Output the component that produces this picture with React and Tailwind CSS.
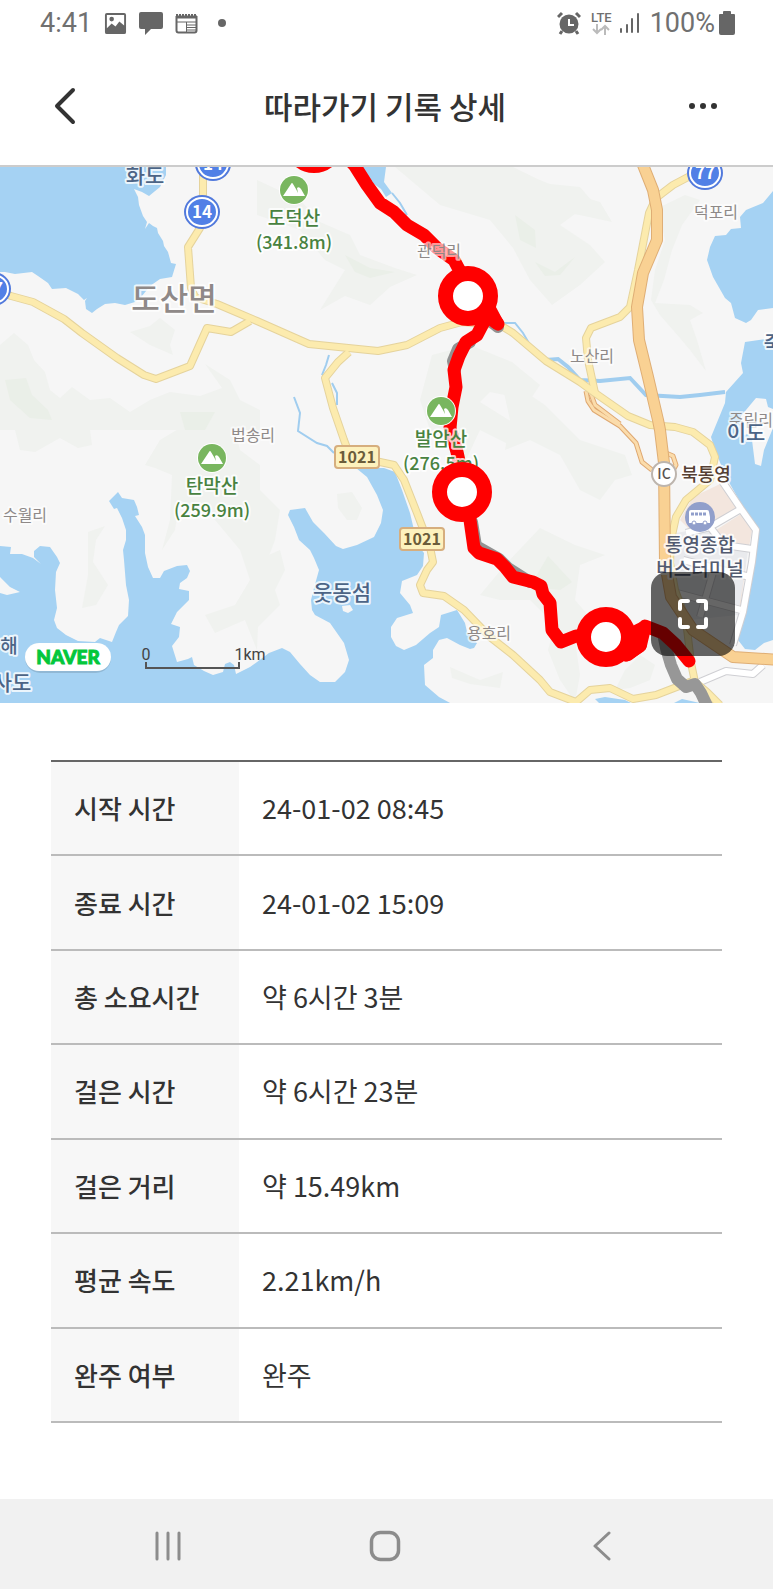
import { useState } from 'react'

const RECORD = [
  { label: '시작 시간', value: '24-01-02 08:45' },
  { label: '종료 시간', value: '24-01-02 15:09' },
  { label: '총 소요시간', value: '약 6시간 3분' },
  { label: '걸은 시간', value: '약 6시간 23분' },
  { label: '걸은 거리', value: '약 15.49km' },
  { label: '평균 속도', value: '2.21km/h' },
  { label: '완주 여부', value: '완주' },
]

// Map drawing data, all in the map's own coordinates
const WATER = [
  'M0 160H166V175L160 187L149 196L142 192L134 189L138 197L139 205L143 216L147 222L145 229L149 223L153 226L157 228L158 233L163 241L164 246L168 252L171 263L176 264L172 277L160 279L150 286L142 296L135 302L125 305L115 303L105 304L97 309L92 313L86 309L85 301L87 298L84 300L78 294L66 288L52 289L48 283L38 276L32 272L15 274L5 272H0Z',
  'M0 546L11 547L10 554L22 554L33 558L41 564L34 557L34 551L40 546L50 547L57 557L60 563L56 572L55 590L57 608L54 620L57 628L66 635L78 641L95 642L100 638L112 642L116 632L119 625L128 616L129 600L126 585L124 560L123 550L126 540L126 530L122 518L117 508L114 509L109 501L118 492L122 498L134 500L137 507L139 515L135 516L142 527L145 535L145 553L148 567L153 578L160 578L164 571L177 566L187 565L190 571L187 578L180 583L179 589L189 591V600L177 612L171 624L180 627L179 637L172 646L177 662L188 659L192 657L194 665L204 671L213 675L223 672L225 664L230 662L234 665L236 674L250 667L257 662L269 653L282 648L290 652L300 664L310 675L320 682H335L345 672L349 660L344 643L330 623L315 615L312 610L311 600L314 588L319 570L314 558L310 550L299 540L294 527L288 515L290 510L305 508L313 522L324 533L336 546L343 549L357 545L374 537L381 523L383 510L377 495L367 477L356 468H384L395 472L402 490L410 513L414 530L420 548L424 553L423 566L417 575L402 581L400 593L410 605L413 613L397 618L391 627L391 637L396 646L404 650L416 645L430 633L439 627L441 615L457 610L465 623L467 632L477 643L474 648L470 649L460 645L447 638L439 640L433 650L433 658L424 665L425 685L439 697L452 704H0Z',
  'M773 191L763 203L746 210L740 217L741 228L731 229L726 235L715 236L710 247L707 260L713 277L725 298L731 303L735 318L746 323L751 320L758 310L773 308Z',
  'M773 338L745 342L741 363L743 373L726 392L725 403L718 420L711 437L715 450L726 477L743 507L758 528L755 557L746 607L738 640L745 649L755 650L764 643L773 640Z',
  'M361 167H386L384 182L392 193L386 197L381 189L370 181Z',
  'M595 699L605 697L625 700L633 704H600Z',
  'M674 703L682 699L700 703Z',
]

const ISLANDS = [
  'M0 577L10 587L20 592L7 595L0 593Z',
  'M342 606L350 605L353 610L348 613L343 611Z',
  'M741 416L756 398L766 399L768 407L773 409V428L764 450L761 466L755 464L752 440L748 434L741 436Z',
]

const HILLS = [
  'M0 345L14 333L28 345L34 360L45 372L50 390L60 398L72 387L90 400L110 398L130 412L150 400L170 392L200 396L222 388L205 364L230 380L240 400L260 410V430H0Z',
  'M130 332L150 326L160 318L175 330L170 345L173 355L150 345Z',
  'M257 180L300 200L320 222L350 235L360 255L395 268L417 275L390 287L370 305L345 296L320 310L345 270L325 260L300 230L257 215Z',
  'M395 167H513L560 190L600 202L612 222L575 214L560 225L590 245L605 262L580 285L552 305L530 280L513 248L490 220L440 205Z',
  'M513 170L550 184L580 187L608 220L575 214L540 195L513 186Z',
  'M658 208L685 195L700 200L682 225L672 250L664 280L655 303L690 305L703 313L690 320L697 340L706 371L690 350L680 338L660 315L651 300L655 270L665 240Z',
  'M432 355L470 345L512 362L540 385L530 400L490 392L480 402L525 430L510 445L480 430L466 460L430 430L420 400Z',
  'M500 375L545 405L580 440L625 455L632 475L615 480L600 500L580 490L560 455L530 440L505 450L510 420Z',
  'M145 465L160 440L185 425L235 430L240 450L260 465V490L280 510L275 540L260 580L257 650L245 620L215 633L205 615L235 605L250 580L240 550L215 520L180 500L175 530L162 550L170 520L172 475L155 468Z',
  'M15 430H90L92 445L78 448L60 438L35 452L20 450Z',
  'M88 532L105 526L96 540L93 562L108 585L96 605L82 608L88 575Z',
  'M337 494L352 492L362 508L357 520L347 520L338 508Z',
  'M257 560L280 550L285 570L275 590L280 605L257 628Z',
  'M480 595L505 565L540 528L575 545L605 555L580 565L575 600L588 615L575 640L580 675L575 702L560 680L548 650L555 625L530 600L500 600Z',
  'M640 655L655 665L650 680L630 688L615 690L625 670Z',
  'M450 667L480 680L503 672L500 688L470 684L452 678Z',
]

const DARK_HILLS = [
  'M5 380L26 378L32 395L48 410L52 420L30 418L10 400Z',
  'M180 412L215 412L205 430H185Z',
  'M515 215L535 230L536 248L520 240Z',
  'M535 262L555 272L575 257L560 275L545 276Z',
  'M345 255L370 268L395 272L370 278L355 272Z',
  'M535 578L548 556L572 582L560 590L540 588Z',
]

const RIVERS = [
  'M392 193L400 203L407 215',
  'M504 323H515L523 333L530 345',
  'M546 360L558 359L568 367L580 380L600 381L630 378L646 395L680 397L700 395L725 392',
  'M329 355L326 365L322 375',
  'M332 383L337 393V405',
  'M294 397L300 413L298 431L317 443L327 446L334 453',
]

const YELLOW_ROADS = [
  'M0 292L11 296L33 302L64 319L82 333L117 358L144 375L156 379L190 366L207 328L231 332L250 321',
  'M203 160V195L200 228L188 247L191 288L195 297L217 304L257 321L309 344L378 351L407 345L440 328L462 322L500 325L513 333L546 361L580 382L595 393L628 416L650 425L675 427L693 432L710 445L715 457L710 480L686 500L676 517L671 540L670 563L675 590L686 620L691 663L695 682L707 692L720 705',
  'M690 176L673 185L656 198L649 213L638 270L630 307L620 317L591 328L586 338L588 360L595 393',
  'M349 352L338 362L325 378L333 408L344 440L350 456L380 462L394 465L404 480L417 513L430 547L433 562L427 570L420 585L423 593L444 596L464 610L490 637L513 655L540 680L550 692L576 702L590 690L610 688L633 699L656 695L695 680',
]

const ORANGE_ROAD = 'M641 160L653 190L657 210V240L643 273L637 307L639 340L648 377L658 420L660 430L664 463L665 563L671 597L693 630L733 657L780 660'
const RAMPS = [
  'M586 391L588 401L594 410L620 426L636 443L642 462L652 470',
  'M591 394L595 405L620 424',
  'M666 453L673 456L676 465L672 472',
]

const CITY_ROADS = [
  'M722 481L741 509L756 530L752 562L743 612L733 645',
  'M741 509L710 527L686 533',
  'M710 527L724 545L752 549',
  'M683 560L750 577',
  'M677 593L741 610',
  'M716 562L700 617',
  'M700 682L726 671L753 674L763 665',
]

const ROUTE = 'M346 156L355 166L367 185L380 203L394 212L407 225L424 235L437 248L454 260L462 275L480 300L498 324L487 316L477 335L466 342L459 356L454 370L456 387L452 407L450 428L457 452L462 475L470 520L474 548L479 553L497 559L505 567L513 577L533 582L541 586L543 594L550 603L552 630L561 642L576 636L606 637L626 655L640 646L637 637L645 626L663 633L676 645L689 661'
const MARKERS = [[314, 143], [468, 296], [462, 492], [606, 637]]

const PLACES = [
  { x: 716, y: 218, text: '덕포리' },
  { x: 592, y: 362, text: '노산리' },
  { x: 253, y: 441, text: '법송리' },
  { x: 25, y: 521, text: '수월리' },
  { x: 489, y: 639, text: '용호리' },
  { x: 439, y: 257, text: '관덕리' },
  { x: 751, y: 426, text: '주림리' },
]

const SEA_NAMES = [
  { x: 145, y: 183, size: 21, text: '화도' },
  { x: 342, y: 600, size: 21, text: '웃동섬' },
  { x: 9, y: 653, size: 19, text: '해' },
  { x: 12, y: 690, size: 21, text: '사도' },
  { x: 746, y: 440, size: 21, text: '이도' },
  { x: 773, y: 351, size: 20, text: '죽' },
]

const PEAKS = [
  { x: 294, y: 190, name: '도덕산', height: '(341.8m)' },
  { x: 212, y: 458, name: '탄막산', height: '(259.9m)' },
  { x: 441, y: 411, name: '발암산', height: '(276.5m)' },
]

const SHIELDS = [[202, 212, '14'], [213, 164, '14'], [705, 173, '77'], [-7, 289, '77']]

function Halo({ children, ...props }) {
  return (
    <text textAnchor="middle" stroke="#fff" strokeWidth="4" strokeOpacity=".8" strokeLinejoin="round" paintOrder="stroke" {...props}>
      {children}
    </text>
  )
}

function TrailMap() {
  return (
    <svg viewBox="0 167 773 536" className="block h-auto w-full" role="img" aria-label="지도">
      <rect y="160" width="773" height="550" fill="#f6f6f6" />
      {HILLS.map(d => <path key={d} d={d} fill="#f0f2ef" />)}
      {DARK_HILLS.map(d => <path key={d} d={d} fill="#eaefe8" />)}
      {WATER.map(d => <path key={d} d={d} fill="#a5d2f3" />)}
      {ISLANDS.map(d => <path key={d} d={d} fill="#f6f6f6" />)}
      <g fill="none" stroke="#a0cdef" strokeWidth="2">
        {RIVERS.map(d => <path key={d} d={d} />)}
      </g>
      <path d={RIVERS[2]} fill="none" stroke="#a0cdef" strokeWidth="4" />

      {/* Town blocks */}
      <path d="M693 497L720 484L738 510L710 526L690 530L680 520Z" fill="#f3e6de" />
      <path d="M716 530L741 514L752 530L749 547L722 543ZM728 560L746 563L740 612L724 605Z" fill="#f3e6de" />
      <path d="M676 533L710 527L724 545L748 551L738 615L690 620L676 590L672 555Z" fill="#e9eaed" />
      <g fill="none" strokeLinejoin="round">
        {CITY_ROADS.map(d => <path key={d} d={d} stroke="#cfcfd3" strokeWidth="8" />)}
        {CITY_ROADS.map(d => <path key={d} d={d} stroke="#fff" strokeWidth="6" />)}
      </g>

      {/* Roads, casing first */}
      <g fill="none" strokeLinejoin="round">
        {RAMPS.map(d => <path key={d} d={d} stroke="#dfa871" strokeWidth="5" />)}
        {RAMPS.map(d => <path key={d} d={d} stroke="#fbdcab" strokeWidth="3" />)}
        {YELLOW_ROADS.map(d => <path key={d} d={d} stroke="#e5d39c" strokeWidth="8" />)}
        {YELLOW_ROADS.map(d => <path key={d} d={d} stroke="#fcebae" strokeWidth="6" />)}
        <path d={ORANGE_ROAD} stroke="#dfae75" strokeWidth="12" />
        <path d={ORANGE_ROAD} stroke="#f9d193" strokeWidth="10" />
      </g>

      <g fill="none" strokeLinecap="round" strokeLinejoin="round">
        <path d="M663 633L666 648L671 665L677 679L686 687L695 684L701 693L709 710" stroke="#979797" strokeWidth="12" />
        <path d="M498 327L487 318M470 342L458 349L453 361L455 370M472 522L476 546L499 559L508 568L530 582" stroke="#929292" strokeWidth="12" />
        <path d={ROUTE} stroke="#f00" strokeWidth="13" />
        <path d="M487 305L496 322M628 654L640 645L644 628L626 637Z" stroke="#f00" strokeWidth="14" />
      </g>

      <g fontFamily="'Noto Sans CJK KR', sans-serif">
        {PLACES.map(p => (
          <Halo key={p.text} x={p.x} y={p.y} fontSize="16" fill="#8e8988" strokeOpacity=".6">{p.text}</Halo>
        ))}
        {SEA_NAMES.map(p => (
          <Halo key={p.text} x={p.x} y={p.y} fontSize={p.size} fontWeight="500" fill="#4c6486">{p.text}</Halo>
        ))}
        <Halo x="174" y="310" fontSize="31" fontWeight="500" fill="#8f8988">도산면</Halo>
        {PEAKS.map(p => (
          <g key={p.name}>
            <circle cx={p.x} cy={p.y} r="15" fill="#fff" />
            <circle cx={p.x} cy={p.y} r="14" fill="#79b65f" />
            <path d={`M${p.x - 11} ${p.y + 6}L${p.x - 3} ${p.y - 6}Q${p.x - 2} ${p.y - 8} ${p.x - 1} ${p.y - 6}L${p.x + 2} ${p.y - 1}L${p.x + 4} ${p.y + 3}L${p.x + 3} ${p.y - 2}Q${p.x + 5} ${p.y - 4} ${p.x + 7} ${p.y - 1}L${p.x + 11} ${p.y + 6}Z`} fill="#fff" />
            <Halo x={p.x} y={p.y + 35} fontSize="19" fontWeight="500" fill="#488240">{p.name}</Halo>
            <Halo x={p.x} y={p.y + 59} fontSize="18" fontWeight="500" fill="#488240">{p.height}</Halo>
          </g>
        ))}
        {SHIELDS.map(([x, y, no]) => (
          <g key={`${x}-${no}`}>
            <ellipse cx={x} cy={y} rx="18" ry="17" fill="#5179dc" />
            <ellipse cx={x} cy={y} rx="15" ry="14" fill="#5180e6" stroke="#fff" strokeWidth="2" />
            <text x={x} y={y + 6} fontSize="17" fontWeight="700" fill="#fff" textAnchor="middle">{no}</text>
          </g>
        ))}
        {[[357, 457], [422, 539]].map(([x, y]) => (
          <g key={y}>
            <rect x={x - 22} y={y - 11} width="44" height="22" rx="3" fill="#fdf1bd" stroke="#d6ae7e" strokeWidth="2" />
            <text x={x} y={y + 6} fontSize="16" fontWeight="700" fill="#6b5c3a" textAnchor="middle">1021</text>
          </g>
        ))}
        <circle cx="664" cy="474" r="12" fill="#fff" stroke="#bdb5ae" strokeWidth="2" />
        <text x="664" y="479" fontSize="14" fontWeight="500" fill="#5a5451" textAnchor="middle">IC</text>
        <Halo x="706" y="481" fontSize="18" fontWeight="500" fill="#553f33">북통영</Halo>
        <circle cx="700" cy="517" r="15" fill="#919fcb" />
        <path d="M689 512Q689 510 691 510H707Q709 510 709 512L710 517V523H689Z" fill="#fff" />
        <path d="M691 514H707" stroke="#919fcb" strokeWidth="3" strokeDasharray="3 1" />
        <circle cx="694" cy="523" r="2" fill="#fff" stroke="#919fcb" />
        <circle cx="705" cy="523" r="2" fill="#fff" stroke="#919fcb" />
        <Halo x="700" y="552" fontSize="19" fontWeight="500" fill="#535b70">통영종합</Halo>
        <Halo x="700" y="576" fontSize="19" fontWeight="500" fill="#535b70">버스터미널</Halo>
      </g>

      {MARKERS.map(([x, y]) => (
        <circle key={y} cx={x} cy={y} r="22.5" fill="#fff" stroke="#f00" strokeWidth="15" />
      ))}

      <rect x="25" y="643" width="86" height="30" rx="15" fill="#000" opacity=".12" />
      <rect x="25" y="643" width="86" height="28" rx="14" fill="#fff" />
      <text x="68" y="664" fontSize="19" fontWeight="900" fontFamily="Lato, sans-serif" fill="#03c73c" stroke="#03c73c" textAnchor="middle">NAVER</text>
      <path d="M146 662V668H239V662" fill="none" stroke="#555" strokeWidth="2" />
      <g fontFamily="Roboto, sans-serif" fontSize="16" fill="#444" textAnchor="middle">
        <text x="146" y="660">0</text>
        <text x="250" y="660">1km</text>
      </g>
    </svg>
  )
}

function StatusBar() {
  return (
    <div className="flex h-[46px] items-center justify-between pr-[38px] pl-10 font-['Roboto',sans-serif] text-[27px] leading-none text-[#707070]">
      <div className="flex items-center">
        <span>4:41</span>
        <svg width="23" height="23" viewBox="0 0 24 24" className="ml-3" fill="#666" aria-hidden="true">
          <path fillRule="evenodd" d="M3 1H21Q23 1 23 3V21Q23 23 21 23H3Q1 23 1 21V3Q1 1 3 1ZM3 3V17L8 12L12 15L16 10L21 14V3ZM8 5A2.4 2.4 0 1 1 8 9.800A2.4 2.400 0 1 1 8 5Z" />
        </svg>
        <svg width="24" height="24" viewBox="0 0 24 24" className="ml-3" fill="#666" aria-hidden="true">
          <path d="M2 1H22Q24 1 24 3V16Q24 18 22 18H12L6 24V18H2Q0 18 0 16V3Q0 1 2 1Z" />
        </svg>
        <svg width="23" height="21" viewBox="0 0 23 21" className="ml-3" fill="none" stroke="#666" aria-hidden="true">
          <path d="M1.500 3V17.500Q1.500 19.500 3.500 19.500H19.500Q21.500 19.500 21.500 17.500V3" strokeWidth="2" />
          <path d="M1 2H22" strokeWidth="2" strokeDasharray="2 1" />
          <path d="M1 4H22" strokeWidth="3" />
          <path d="M2 9H21M11.500 9V19M12 12H21M12 14.500H21M12 17H21" />
        </svg>
        <span className="ml-5 size-2 rounded-full bg-[#666]" />
      </div>
      <div className="flex items-center">
        <svg width="24" height="24" viewBox="0 0 24 24" fill="none" stroke="#666" aria-hidden="true">
          <circle cx="12" cy="13" r="9.500" fill="#666" stroke="none" />
          <path d="M1 6L5 2M23 6L19 2M5 20L3 23M19 20L21 23" strokeWidth="3" />
          <path d="M12 8V14H17" stroke="#fff" strokeWidth="2" />
        </svg>
        <span className="ml-2.5 flex flex-col items-center text-[13px] font-medium leading-3">
          LTE
          <svg width="18" height="11" viewBox="0 0 18 11" fill="none" stroke="#bbb" strokeWidth="2" aria-hidden="true">
            <path d="M5 0V9M1 5L5 9L9 5M13 11V2M9 6L13 2L17 6" />
          </svg>
        </span>
        <svg width="22" height="22" viewBox="0 0 22 22" className="ml-1.5" stroke="#666" strokeWidth="2" strokeLinecap="round" aria-hidden="true">
          <path d="M3 17V20M9 13V20M14 7V20M20 2V20" />
        </svg>
        <span className="ml-2.5">100%</span>
        <svg width="16" height="24" viewBox="0 0 16 24" fill="#666" className="ml-1" aria-hidden="true">
          <path d="M4 1Q4 0 5 0H11Q12 0 12 1V3H15Q16 3 16 4V22Q16 24 14 24H2Q0 24 0 22V4Q0 3 1 3H4Z" />
        </svg>
      </div>
    </div>
  )
}

export default function App() {
  const [expanded, setExpanded] = useState(false)

  return (
    <div className="flex min-h-screen flex-col bg-white font-['Noto_Sans_CJK_KR',sans-serif] text-[#333]">
      <StatusBar />

      <header className="flex h-[121px] items-center justify-between border-b-2 border-[#ccc] pr-[49px] pl-[46px]">
        <button type="button" aria-label="뒤로" className="flex size-10 items-center justify-center">
          <svg width="24" height="40" viewBox="0 0 24 40" fill="none" stroke="currentColor" strokeWidth="4" strokeLinecap="round" strokeLinejoin="round">
            <path d="M19 4L3 20L19 36" />
          </svg>
        </button>
        <h1 className="text-[31px] font-medium leading-10">따라가기 기록 상세</h1>
        <button type="button" aria-label="더보기" className="flex size-10 items-center justify-center">
          <svg width="30" height="8" viewBox="0 0 30 8" fill="currentColor">
            <circle cx="3" cy="4" r="3" />
            <circle cx="14" cy="4" r="3" />
            <circle cx="25" cy="4" r="3" />
          </svg>
        </button>
      </header>

      <section className="relative overflow-hidden">
        <TrailMap />
        <button
          type="button"
          aria-label="전체 화면"
          aria-pressed={expanded}
          onClick={() => setExpanded(!expanded)}
          className="absolute right-[38px] bottom-[47px] flex size-[84px] items-center justify-center rounded-2xl bg-black/60"
        >
          <svg width="32" height="32" viewBox="0 0 32 32" fill="none" stroke="#fff" strokeWidth="4" strokeLinecap="round" strokeLinejoin="round">
            <path d="M3 11V5Q3 3 5 3H11M21 3H27Q29 3 29 5V11M29 21V27Q29 29 27 29H21M11 29H5Q3 29 3 27V21" />
          </svg>
        </button>
      </section>

      <main className="px-[51px] pt-[57px] pb-16">
        <table className="h-[663px] w-full border-collapse border-t-2 border-[#666] text-left leading-9">
          <tbody>
            {RECORD.map(row => (
              <tr key={row.label} className="border-b-2 border-[#bbb]">
                <th scope="row" className="w-[188px] bg-[#f7f7f7] px-[23px] text-[26px] font-medium whitespace-nowrap">{row.label}</th>
                <td className="px-[23px] text-[27px]">{row.value}</td>
              </tr>
            ))}
          </tbody>
        </table>
      </main>

      <nav className="mt-auto grid h-[90px] grid-cols-3 items-center bg-[#f1f1f1] pt-1 pr-[63px] pl-[59px] text-[#8c8c8c]">
        <button type="button" aria-label="최근 앱" className="flex justify-center">
          <svg width="30" height="30" viewBox="0 0 30 30" stroke="currentColor" strokeWidth="3" strokeLinecap="round">
            <path d="M4 2V28M15 2V28M26 2V28" />
          </svg>
        </button>
        <button type="button" aria-label="홈" className="flex justify-center">
          <svg width="32" height="32" viewBox="0 0 32 32" fill="none" stroke="currentColor" strokeWidth="3.500">
            <rect x="2.500" y="2.500" width="27" height="27" rx="9" />
          </svg>
        </button>
        <button type="button" aria-label="뒤로 가기" className="flex justify-center">
          <svg width="20" height="30" viewBox="0 0 20 30" fill="none" stroke="currentColor" strokeWidth="3" strokeLinecap="round" strokeLinejoin="round">
            <path d="M17 2L3 15L17 28" />
          </svg>
        </button>
      </nav>
    </div>
  )
}
